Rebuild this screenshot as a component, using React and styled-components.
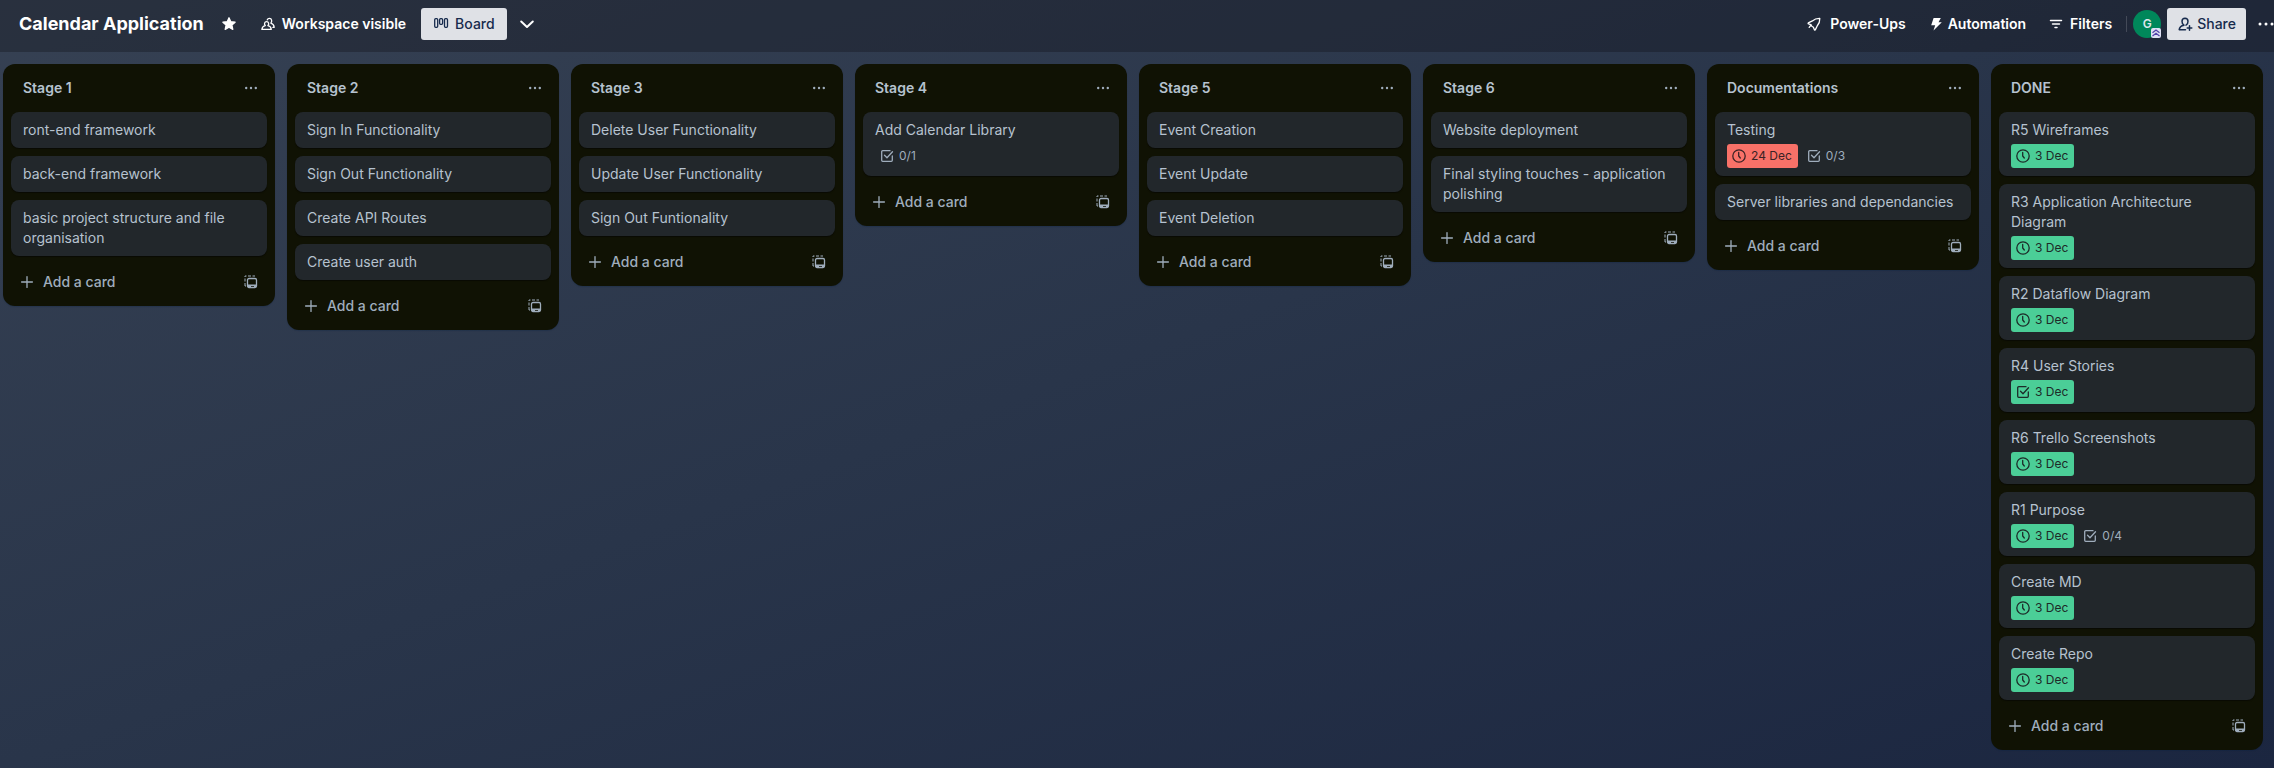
import React from 'react';
import styled, { createGlobalStyle, css } from 'styled-components';

const GlobalStyle = createGlobalStyle`
  *, *::before, *::after { box-sizing: border-box; }
  body {
    margin: 0;
    font-family: Inter, "Liberation Sans", sans-serif;
    font-size: 14px;
    line-height: 20px;
    color: #b6c2cf;
  }
  button { font: inherit; color: inherit; background: none; border: 0; padding: 0; cursor: pointer; }
`;

const Page = styled.div`
  min-height: 100vh;
  display: flex;
  flex-direction: column;
  background: linear-gradient(160deg, #364153 0%, #29354a 48%, #1b2640 100%);
`;

const Header = styled.header`
  display: flex;
  align-items: center;
  justify-content: space-between;
  padding: 8px 0 12px 8px;
  background: rgba(14, 16, 22, 0.33);
  color: #fff;
  overflow: hidden;
  white-space: nowrap;
`;

const HeaderGroup = styled.div`
  display: flex;
  align-items: center;
  gap: ${(p) => p.$gap}px;
`;

const BoardTitle = styled.h1`
  margin: 0;
  padding: 0 5px 0 11px;
  font-size: 18px;
  line-height: 32px;
  font-weight: 700;
`;

const ToolButton = styled.button`
  display: flex;
  align-items: center;
  justify-content: center;
  gap: ${(p) => p.$gap || 6}px;
  height: 32px;
  padding: 0 ${(p) => p.$pad ?? 12}px;
  min-width: 32px;
  border-radius: 3px;
  font-weight: ${(p) => (p.$strong ? 600 : 500)};
  ${(p) => p.$filled && css`
    background: #dfe1e6;
    color: #172b4d;
  `}
`;

const MenuButton = styled.button`
  display: flex;
  align-items: center;
  justify-content: flex-end;
  width: 22px;
  height: 32px;
`;

const Divider = styled.span`
  width: 1px;
  height: 16px;
  background: rgba(255, 255, 255, 0.16);
`;

const Avatar = styled.button`
  position: relative;
  width: 28px;
  height: 28px;
  border-radius: 50%;
  background: #00875a;
  color: #dfe6ee;
  font-size: 12px;
  font-weight: 600;
`;

const AdminBadge = styled.svg`
  position: absolute;
  right: 0;
  bottom: 0;
`;

const Lists = styled.main`
  display: flex;
  align-items: flex-start;
  gap: 12px;
  padding: 12px 3px;
  flex: 1;
  overflow: hidden;
`;

const List = styled.section`
  flex: 0 0 272px;
  padding: 8px;
  border-radius: 12px;
  background: #101204;
  box-shadow: 0 1px 1px rgba(9, 30, 66, 0.25);
`;

const ListHeader = styled.div`
  display: flex;
  align-items: center;
  justify-content: space-between;
  height: 32px;
  margin-bottom: 8px;
  padding-left: 12px;
`;

const ListTitle = styled.h2`
  margin: 0;
  font-size: 14px;
  line-height: 20px;
  font-weight: 600;
`;

const IconButton = styled.button`
  display: flex;
  align-items: center;
  justify-content: center;
  width: 32px;
  height: 32px;
  color: #9fadbc;
`;

const Cards = styled.ol`
  display: flex;
  flex-direction: column;
  gap: 8px;
  margin: 0;
  padding: 0;
  list-style: none;
`;

const Card = styled.li`
  padding: 8px 12px;
  border-radius: 8px;
  background: #22272b;
  box-shadow: 0 1px 1px rgba(3, 4, 4, 0.5);
`;

const Badges = styled.div`
  display: flex;
  gap: 4px;
  margin-top: 4px;
`;

const badgeTones = {
  green: css`background: #4bce97; color: #1d2b28;`,
  red: css`background: #f87168; color: #3a2225;`,
  plain: css`color: #9fadbc;`,
};

const Badge = styled.span`
  display: flex;
  align-items: center;
  gap: 4px;
  height: 24px;
  padding: 0 6px 0 4px;
  border-radius: 3px;
  font-size: 12px;
  ${(p) => badgeTones[p.$tone]}
`;

const ListFooter = styled.div`
  display: flex;
  align-items: center;
  justify-content: space-between;
  margin-top: 10px;
  height: 32px;
`;

const AddCard = styled.button`
  display: flex;
  align-items: center;
  gap: 8px;
  height: 32px;
  padding-left: 8px;
  font-weight: 500;
  color: #9fadbc;
`;

const Icon = ({ size = 16, children, ...rest }) => (
  <svg width={size} height={size} viewBox="0 0 16 16" fill="none" stroke="currentColor" strokeWidth="1.3" aria-hidden="true" {...rest}>
    {children}
  </svg>
);

const StarIcon = () => (
  <Icon>
    <path fill="currentColor" strokeLinejoin="round" d="M8 1.8l1.8 3.9 4.3.5-3.200 2.900.9 4.300L8 11.300l-3.800 2.100.9-4.300-3.200-2.900 4.300-.5z" />
  </Icon>
);
const PeopleIcon = () => (
  <Icon strokeLinejoin="round" strokeLinecap="round">
    <path d="M5.300 9.600C3.900 8.300 4.400 5.600 6.600 5.600s2.700 2.700 1.300 4c1.900.3 3.200 1.500 3.400 3.800H1.900c.2-2.300 1.500-3.500 3.400-3.800z" />
    <path d="M7.200 3.900c.4-1 1.200-1.500 2.200-1.500 2.500 0 2.900 3.200 1.400 4.700 2 .5 3.200 1.900 3.400 4.300h-1.300" />
  </Icon>
);
const BoardIcon = () => (
  <Icon>
    <rect x="1.700" y="2.700" width="3" height="8.600" rx="1" />
    <rect x="6.600" y="2.700" width="3" height="5.600" rx="1" />
    <rect x="11.500" y="2.700" width="3" height="8.600" rx="1" />
  </Icon>
);
const ChevronIcon = () => (
  <Icon strokeWidth="2"><path strokeLinecap="round" strokeLinejoin="round" d="M2.200 5.500L8 11l5.800-5.500" /></Icon>
);
const RocketIcon = () => (
  <Icon>
    <path strokeLinejoin="round" strokeLinecap="round" d="M13.800 2.400C10.500 2.300 8.300 3.200 6.400 4.900L2.300 6.800l-.2.800 3.100 1.300c.2 1.300.9 2 2.100 2.200l1.200 2.900.8-.1 2-4.100c1.700-1.900 2.600-4.100 2.500-7.400zM4.700 9.500l-1.500 1.900" />
  </Icon>
);
const BoltIcon = () => (
  <Icon><path stroke="none" fill="currentColor" d="M5.600 2h7.200l-2.300 4.200h3.300L5.500 14.500l1.700-5.300H3.200z" /></Icon>
);
const FilterIcon = () => (
  <Icon strokeWidth="1.5"><path strokeLinecap="round" d="M2.500 4.500h11M4.500 8h7M7 11.500h2" /></Icon>
);
const ShareIcon = () => (
  <Icon strokeWidth="1.5">
    <path strokeLinecap="round" strokeLinejoin="round" d="M9 9.200c2.600-1.500 3-6.800-1-6.900-4 .1-3.600 5.400-1 6.900-2.600.4-4.500 1.700-4.800 4.500h6.300M12.500 9.700v4.600M10.200 12h4.600" />
  </Icon>
);
const DotsIcon = () => (
  <Icon stroke="none" fill="currentColor">
    <circle cx="3.200" cy="8" r="1.200" /><circle cx="8" cy="8" r="1.200" /><circle cx="12.800" cy="8" r="1.200" />
  </Icon>
);
const WideDotsIcon = () => (
  <Icon stroke="none" fill="currentColor">
    <circle cx="2" cy="8" r="1.500" /><circle cx="8" cy="8" r="1.500" /><circle cx="14" cy="8" r="1.500" />
  </Icon>
);
const PlusIcon = () => (
  <Icon><path strokeLinecap="round" d="M8 2.600v10.800M2.600 8h10.800" /></Icon>
);
const TemplateIcon = () => (
  <Icon strokeWidth="1">
    <rect x="4.500" y="4.500" width="9" height="9" rx="1.500" strokeWidth="1.300" />
    <path stroke="none" fill="currentColor" d="M5 10.500h8.500V13H11v-1H8v1H5z" />
    <path d="M2 3V2h1.500M5 2h3M9.500 2H12M2 4.500v3M2 9v3h1" />
  </Icon>
);
const ClockIcon = () => (
  <Icon><circle cx="8" cy="8" r="6.200" /><path strokeLinecap="round" strokeLinejoin="round" d="M7.700 4.500V8l1.600 2" /></Icon>
);
const CheckIcon = () => (
  <Icon><path strokeLinejoin="round" strokeLinecap="round" d="M11 2.700H3.700a1 1 0 0 0-1 1v8.600a1 1 0 0 0 1 1h8.600a1 1 0 0 0 1-1V8M5.500 7.200l2.500 2.500 5.500-6" /></Icon>
);

const due = (text, tone = 'green', icon = 'clock') => ({ text, tone, icon });
const check = (text) => ({ text, tone: 'plain', icon: 'check' });

const lists = [
  { title: 'Stage 1', cards: [['ront-end framework'], ['back-end framework'], ['basic project structure and file organisation']] },
  { title: 'Stage 2', cards: [['Sign In Functionality'], ['Sign Out Functionality'], ['Create API Routes'], ['Create user auth']] },
  { title: 'Stage 3', cards: [['Delete User Functionality'], ['Update User Functionality'], ['Sign Out Funtionality']] },
  { title: 'Stage 4', cards: [['Add Calendar Library', check('0/1')]] },
  { title: 'Stage 5', cards: [['Event Creation'], ['Event Update'], ['Event Deletion']] },
  { title: 'Stage 6', cards: [['Website deployment'], ['Final styling touches - application polishing']] },
  { title: 'Documentations', cards: [['Testing', due('24 Dec', 'red'), check('0/3')], ['Server libraries and dependancies']] },
  {
    title: 'DONE',
    cards: [
      ['R5 Wireframes', due('3 Dec')],
      ['R3 Application Architecture Diagram', due('3 Dec')],
      ['R2 Dataflow Diagram', due('3 Dec')],
      ['R4 User Stories', due('3 Dec', 'green', 'check')],
      ['R6 Trello Screenshots', due('3 Dec')],
      ['R1 Purpose', due('3 Dec'), check('0/4')],
      ['Create MD', due('3 Dec')],
      ['Create Repo', due('3 Dec')],
    ],
  },
];

export default function App() {
  return (
    <Page>
      <GlobalStyle />
      <Header>
        <HeaderGroup $gap={4}>
          <BoardTitle>Calendar Application</BoardTitle>
          <ToolButton $pad={0} aria-label="Star board"><StarIcon /></ToolButton>
          <ToolButton $strong $pad={11}><PeopleIcon />Workspace visible</ToolButton>
          <ToolButton $filled><BoardIcon />Board</ToolButton>
          <ToolButton $pad={0} aria-label="Board views"><ChevronIcon /></ToolButton>
        </HeaderGroup>
        <HeaderGroup $gap={6}>
          <ToolButton $strong $pad={8} $gap={8}><RocketIcon />Power-Ups</ToolButton>
          <ToolButton $strong $pad={8} $gap={4}><BoltIcon />Automation</ToolButton>
          <ToolButton $strong $pad={8} $gap={6}><FilterIcon />Filters</ToolButton>
          <Divider />
          <Avatar aria-label="G, board admin">
            G
            <AdminBadge width="10" height="10" viewBox="0 0 10 10" aria-hidden="true">
              <rect width="10" height="10" rx="2" fill="#dfe1f4" />
              <path d="M1.500 4.700L5 2l3.500 2.700M1.500 8L5 5.300 8.500 8" fill="none" stroke="#5243aa" strokeWidth="1.300" />
            </AdminBadge>
          </Avatar>
          <ToolButton $filled $pad={10} $gap={4}><ShareIcon />Share</ToolButton>
          <MenuButton aria-label="Board menu"><WideDotsIcon /></MenuButton>
        </HeaderGroup>
      </Header>
      <Lists>
        {lists.map((list) => (
          <List key={list.title}>
            <ListHeader>
              <ListTitle>{list.title}</ListTitle>
              <IconButton aria-label="List actions"><DotsIcon /></IconButton>
            </ListHeader>
            <Cards>
              {list.cards.map(([title, ...badges]) => (
                <Card key={title}>
                  {title}
                  {badges.length > 0 && (
                    <Badges>
                      {badges.map((b) => (
                        <Badge key={b.text} $tone={b.tone}>
                          {b.icon === 'clock' ? <ClockIcon /> : <CheckIcon />}
                          {b.text}
                        </Badge>
                      ))}
                    </Badges>
                  )}
                </Card>
              ))}
            </Cards>
            <ListFooter>
              <AddCard><PlusIcon />Add a card</AddCard>
              <IconButton aria-label="Create from template"><TemplateIcon /></IconButton>
            </ListFooter>
          </List>
        ))}
      </Lists>
    </Page>
  );
}
